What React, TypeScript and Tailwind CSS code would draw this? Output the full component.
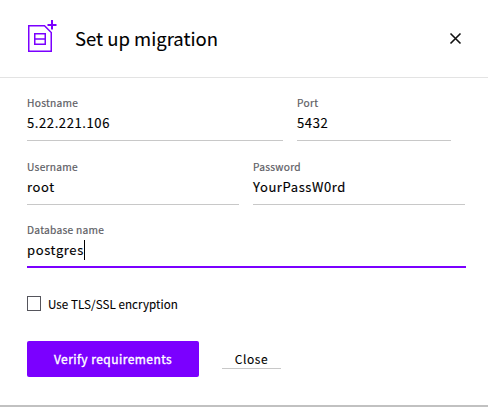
import React from "react";

type FieldProps = {
  label: string;
  value: string;
  width: string;
  focused?: boolean;
};

function Field({ label, value, width, focused }: FieldProps) {
  return (
    <div className={`flex h-[46px] shrink-0 flex-col ${width} ${focused ? "border-b-2 border-[#7b00ff]" : "border-b border-[#c8c8c8]"}`}>
      <label className="h-4 text-[10.2px] leading-4 tracking-[0.28px] text-[#5c5c63] [-webkit-text-stroke:0.2px_#5c5c63]">{label}</label>
      <div className="flex h-[22px] items-center">
        <span className="pt-0.5 text-[13px] leading-[22px] tracking-[0.6px] whitespace-nowrap text-black [-webkit-text-stroke:0.15px_#000]">{value}</span>
        {focused && <span className="mt-0.5 h-5 w-px bg-black" />}
      </div>
    </div>
  );
}

export default function App() {
  return (
    <div className="flex h-[407px] w-[488px] flex-col bg-white font-['Noto_Sans_CJK_SC','Noto_Sans',sans-serif] text-black">
      <header className="flex h-[78px] shrink-0 items-center border-b border-[#e3e3e3] pr-[26px] pl-[27px]">
        <svg width="32" height="34" viewBox="0 0 32 34" fill="none" stroke="#7b00ff" className="-mt-[3px] shrink-0">
          <path d="M1.75 5.75H17.5L24.25 12.5V31.25H1.75Z" strokeWidth="1.5" />
          <path d="M7.75 13.75H18.25V24.25H7.75ZM7.75 19H18.25" strokeWidth="1.5" />
          <path d="M25 0V9.5M20.5 5H29.5" strokeWidth="2" />
        </svg>
        <h1 className="-mt-0.5 ml-4 text-[18.5px] leading-7 font-normal whitespace-nowrap [-webkit-text-stroke:0.1px_#000]">Set up migration</h1>
        <button aria-label="Close dialog" className="ml-auto">
          <svg width="13" height="13" viewBox="0 0 13 13" fill="none" stroke="#111" strokeWidth="1.6">
            <path d="M1.5 1.5L11.5 11.5M11.5 1.5L1.5 11.5" />
          </svg>
        </button>
      </header>
      <main className="flex grow flex-col pt-[17px] pl-[27px]">
        <div className="flex gap-[14px]">
          <Field label="Hostname" value="5.22.221.106" width="w-[256px]" />
          <Field label="Port" value="5432" width="w-[154px]" />
        </div>
        <div className="mt-[18px] flex gap-[14px]">
          <Field label="Username" value="root" width="w-[212px]" />
          <Field label="Password" value="YourPassW0rd" width="w-[212px]" />
        </div>
        <div className="mt-[17px] flex">
          <Field label="Database name" value="postgres" width="w-[439px]" focused />
        </div>
        <label className="mt-[26px] flex h-5 items-center">
          <span className="mb-px h-[15px] w-[14px] border border-[#55555c]" />
          <span className="ml-[7px] text-[11.6px] leading-5 tracking-[0.06px] whitespace-nowrap [-webkit-text-stroke:0.1px_#000]">Use TLS/SSL encryption</span>
        </label>
        <div className="mt-[27px] flex items-center">
          <button className="h-9 w-[172px] rounded-[2px] bg-[#7b00ff] text-[12px] leading-9 tracking-[0.45px] whitespace-nowrap text-white [-webkit-text-stroke:0.35px_#fff]">Verify requirements</button>
          <button className="ml-[23px] h-[19px] w-[59px] border-b border-[#c8c8c8] text-[12px] leading-[18px] tracking-[0.6px] [-webkit-text-stroke:0.1px_#000]">Close</button>
        </div>
      </main>
      <div className="h-0.5 shrink-0 bg-[#c1c1c1]" />
    </div>
  );
}
